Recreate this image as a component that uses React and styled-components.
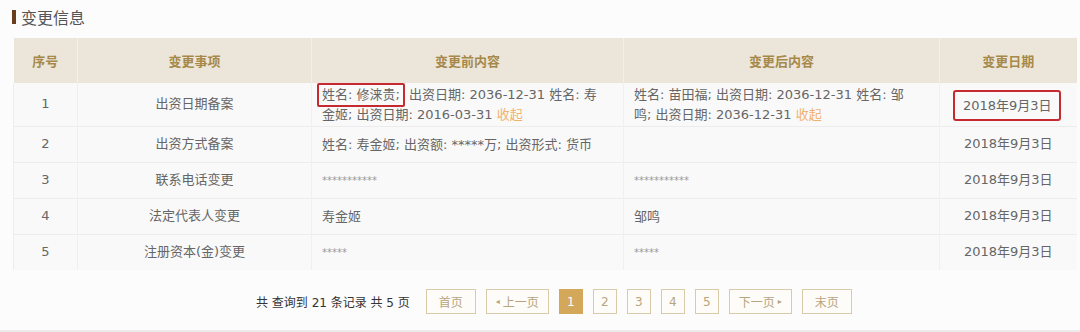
import styled, { createGlobalStyle } from 'styled-components';

const ROWS = [
    {
        id: 1,
        item: '出资日期备案',
        before: [['姓名: 修涞贵;', ' 出资日期: 2036-12-31 姓名: 寿'], [null, '金姬; 出资日期: 2016-03-31 ']],
        after: [[null, '姓名: 苗田福; 出资日期: 2036-12-31 姓名: 邹'], [null, '鸣; 出资日期: 2036-12-31 ']],
        date: '2018年9月3日',
        marked: true,
    },
    { id: 2, item: '出资方式备案', before: '姓名: 寿金姬; 出资额: *****万; 出资形式: 货币', after: '', date: '2018年9月3日' },
    { id: 3, item: '联系电话变更', before: '***********', after: '***********', date: '2018年9月3日', stars: true },
    { id: 4, item: '法定代表人变更', before: '寿金姬', after: '邹鸣', date: '2018年9月3日' },
    { id: 5, item: '注册资本(金)变更', before: '*****', after: '*****', date: '2018年9月3日', stars: true },
];

const PAGES = [1, 2, 3, 4, 5];

const GlobalStyle = createGlobalStyle`
    body {
        margin: 0;
        background: #fcfcfc;
        font-family: "DejaVu Sans", "Noto Sans CJK SC", sans-serif;
    }
`;

const Folded = ({ lines }) => (
    <>
        {lines.map((line, i) => (
            <Line key={i}>
                {line[0] && <Marked>{line[0]}</Marked>}
                {line[1]}
                {i === lines.length - 1 && <Toggle>收起</Toggle>}
            </Line>
        ))}
    </>
);

const App = () => {
    return (
        <Page>
            <GlobalStyle />
            <Title>变更信息</Title>
            <Table>
                <colgroup>
                    <col style={{ width: 64 }} />
                    <col style={{ width: 234 }} />
                    <col style={{ width: 312 }} />
                    <col style={{ width: 316 }} />
                    <col style={{ width: 137 }} />
                </colgroup>
                <thead>
                    <tr>
                        <Th>序号</Th>
                        <Th>变更事项</Th>
                        <Th>变更前内容</Th>
                        <Th>变更后内容</Th>
                        <Th>变更日期</Th>
                    </tr>
                </thead>
                <tbody>
                    {ROWS.map((row) => (
                        <Tr key={row.id} $tall={row.marked}>
                            <Td $center>{row.id}</Td>
                            <Td $center>{row.item}</Td>
                            <Td $stars={row.stars}>
                                {Array.isArray(row.before) ? <Folded lines={row.before} /> : row.before}
                            </Td>
                            <Td $stars={row.stars}>
                                {Array.isArray(row.after) ? <Folded lines={row.after} /> : row.after}
                            </Td>
                            <Td $center>{row.marked ? <DateBox>{row.date}</DateBox> : row.date}</Td>
                        </Tr>
                    ))}
                </tbody>
            </Table>
            <Pager>
                <Summary>共 查询到 21 条记录 共 5 页</Summary>
                <PageButton $wide>首页</PageButton>
                <PageButton $wide>
                    <Arrow>◂</Arrow>上一页
                </PageButton>
                {PAGES.map((p) => (
                    <PageButton key={p} $active={p === 1}>
                        {p}
                    </PageButton>
                ))}
                <PageButton $wide>
                    下一页<Arrow>▸</Arrow>
                </PageButton>
                <PageButton $wide>末页</PageButton>
            </Pager>
        </Page>
    );
};

const Page = styled.div`
    width: 1080px;
    height: 332px;
    box-sizing: border-box;
    padding: 7px 4px 0 13px;
    border-bottom: 2px solid #ececec;
    overflow: hidden;
`;

const Title = styled.h3`
    display: flex;
    align-items: center;
    gap: 5px;
    margin: 0 0 11px -1px;
    height: 20px;
    font-size: 16px;
    font-weight: normal;
    color: #555;

    &::before {
        content: '';
        width: 4px;
        height: 14px;
        background: #6a3d1c;
    }
`;

const Table = styled.table`
    width: 1063px;
    border-collapse: collapse;
    table-layout: fixed;
    font-size: 13px;
    color: #666;
`;

const Th = styled.th`
    height: 45px;
    padding: 0;
    background: #ece6da;
    color: #a6894a;
    font-weight: bold;
    font-size: 13px;
    border-left: 1px solid #f4f0e8;

    &:first-child {
        border-left: none;
    }
`;

const Tr = styled.tr`
    height: ${(p) => (p.$tall ? 43 : 36)}px;
    background: #f9f9f9;
    border-bottom: 1px solid #ececec;

    &:last-child {
        border-bottom: none;
    }
`;

const Td = styled.td`
    padding: ${(p) => (p.$center ? '0 10px' : '2px 10px 0')};
    text-align: ${(p) => (p.$center ? 'center' : 'left')};
    vertical-align: middle;
    line-height: 20px;
    border-left: 1px solid #f0f0f0;
    font-size: ${(p) => (p.$stars ? '10px' : '13px')};
    color: ${(p) => (p.$stars ? '#999' : '#666')};
    white-space: nowrap;

    &:first-child {
        border-left: 1px solid #eeeeee;
    }
`;

const Line = styled.div`
    line-height: 20px;
`;

const Marked = styled.span`
    display: inline-block;
    margin: -3px 0 -3px -5px;
    padding: 1px 3px;
    line-height: 18px;
    border: 2px solid #c42a30;
    border-radius: 2px;
`;

const Toggle = styled.span`
    color: #f2b26f;
`;

const DateBox = styled.span`
    display: inline-block;
    box-sizing: border-box;
    width: 108px;
    height: 31px;
    line-height: 27px;
    border: 2px solid #c42a30;
    border-radius: 3px;
    margin: 2px 0 0 -2px;
`;

const Pager = styled.div`
    display: flex;
    align-items: center;
    gap: 10px;
    padding: 19px 0 0 243px;
`;

const Summary = styled.span`
    font-size: 12px;
    color: #333;
    margin-right: 6px;
`;

const PageButton = styled.span`
    display: inline-flex;
    align-items: center;
    justify-content: center;
    gap: 3px;
    box-sizing: border-box;
    height: 25px;
    min-width: ${(p) => (p.$wide ? '50px' : '24px')};
    padding: 0 ${(p) => (p.$wide ? '9px' : '0')};
    font-size: 12px;
    color: ${(p) => (p.$active ? '#fff' : '#b8a57c')};
    background: ${(p) => (p.$active ? '#d3a85a' : '#fdfcf9')};
    border: 1px solid ${(p) => (p.$active ? '#d3a85a' : '#d9cba9')};
`;

const Arrow = styled.span`
    font-size: 8px;
`;

export default App;
